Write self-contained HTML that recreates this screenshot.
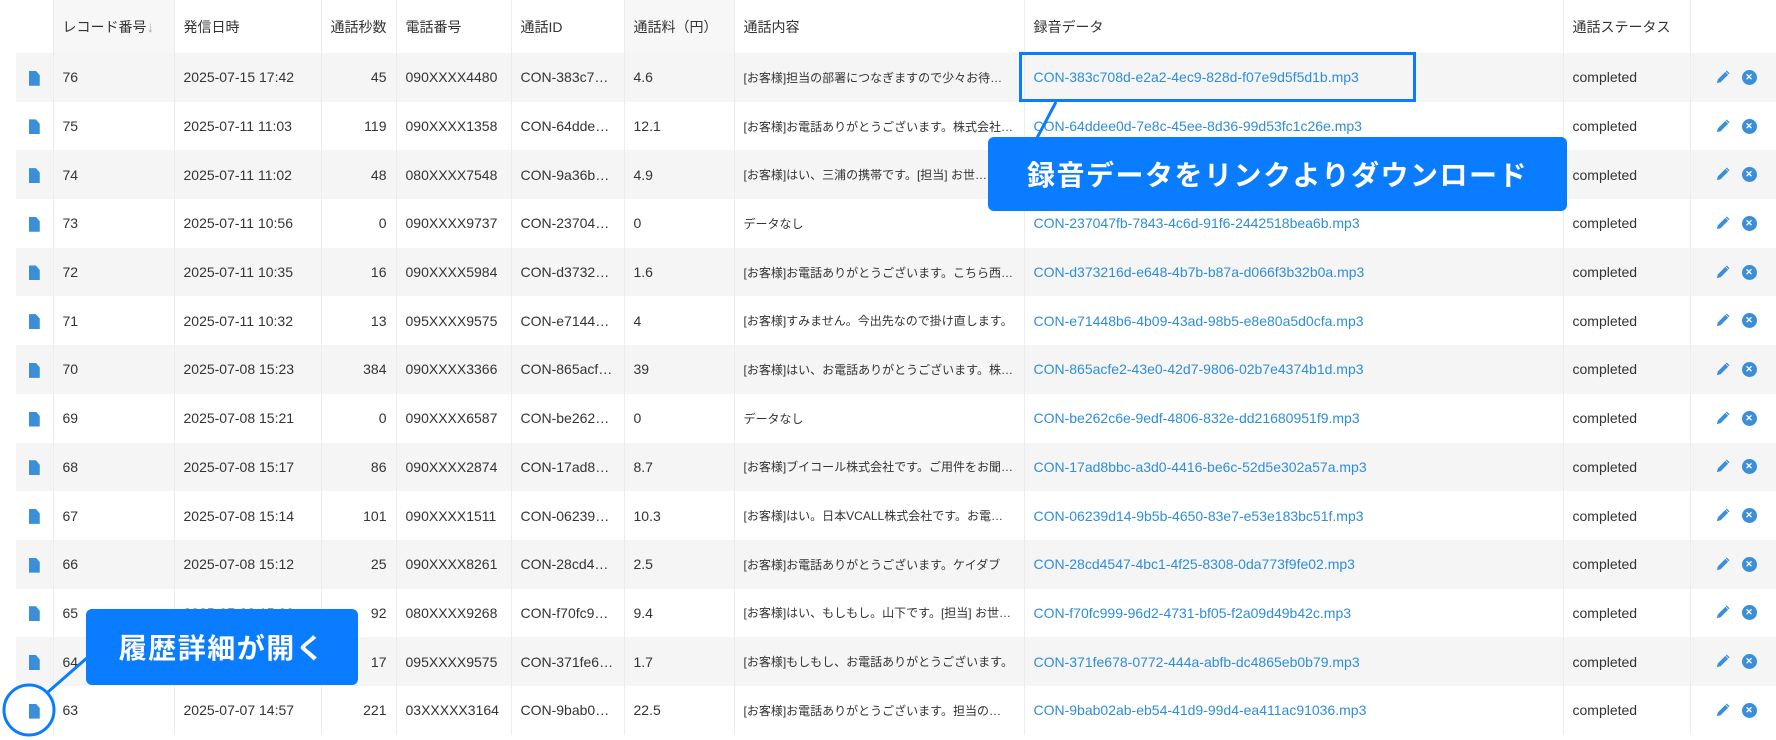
<!DOCTYPE html>
<html><head><meta charset="utf-8"><style>
*{margin:0;padding:0;box-sizing:border-box}
body{width:1776px;height:740px;overflow:hidden;background:#fff;font-family:"Liberation Sans","Noto Sans CJK JP",sans-serif;color:#333;position:relative}
table{position:absolute;left:16px;top:0;border-collapse:collapse;table-layout:fixed;width:1760px}
td,th{border-right:1px solid #ececec;font-weight:normal;text-align:left;padding:0 9px;font-size:14px;white-space:nowrap;overflow:hidden}
th{height:53px;font-size:14px;color:#333}
th.s{background:#f7f7f7}
td{height:48.7px}
tr.g td{background:#f5f5f5}
td.r{text-align:right}
td.c{font-size:12px}
td a{color:#2e8ddb;text-decoration:none}
td.i{padding:0;text-align:center}
.doc{display:inline-block;width:11px;height:15px;background:#3a8fd8;clip-path:polygon(0 0,65% 0,100% 30%,100% 100%,0 100%);vertical-align:middle}
.acts{display:flex;gap:12px;align-items:center;padding-left:15px}
.x{width:15px;height:15px;border-radius:50%;background:#3a8fd8;color:#fff;font-size:9px;line-height:15px;text-align:center;font-weight:bold}
.lbl{position:absolute;background:#0a7cff;color:#fff;font-weight:bold;font-size:28px;border-radius:6px;display:flex;align-items:center;justify-content:center;letter-spacing:1.5px}
</style></head><body>
<svg width="0" height="0" style="position:absolute"><defs><symbol id="p" viewBox="0 0 16 16"><path d="M2 14l1-4 8-8 3 3-8 8z" fill="#3a8fd8"/><path d="M11.5 1.5l1-1 3 3-1 1z" fill="#3a8fd8"/></symbol></defs></svg>
<table>
<colgroup><col style="width:37px"><col style="width:121px"><col style="width:147px"><col style="width:75px"><col style="width:115px"><col style="width:113px"><col style="width:110px"><col style="width:290px"><col style="width:539px"><col style="width:127px"><col style="width:86px"></colgroup>
<tr><th></th><th class="s">レコード番号<span style="color:#aaa;font-size:15px">↓</span></th><th>発信日時</th><th>通話秒数</th><th>電話番号</th><th>通話ID</th><th class="s">通話料（円）</th><th>通話内容</th><th>録音データ</th><th>通話ステータス</th><th></th></tr>
<tr class="g"><td class="i"><span class="doc"></span></td><td>76</td><td>2025-07-15 17:42</td><td class="r">45</td><td>090XXXX4480</td><td>CON-383c7…</td><td>4.6</td><td class="c">[お客様]担当の部署につなぎますので少々お待…</td><td><a>CON-383c708d-e2a2-4ec9-828d-f07e9d5f5d1b.mp3</a></td><td>completed</td><td><div class="acts"><svg width="15" height="15"><use href="#p"/></svg><div class="x">✕</div></div></td></tr>
<tr><td class="i"><span class="doc"></span></td><td>75</td><td>2025-07-11 11:03</td><td class="r">119</td><td>090XXXX1358</td><td>CON-64dde…</td><td>12.1</td><td class="c">[お客様]お電話ありがとうございます。株式会社…</td><td><a>CON-64ddee0d-7e8c-45ee-8d36-99d53fc1c26e.mp3</a></td><td>completed</td><td><div class="acts"><svg width="15" height="15"><use href="#p"/></svg><div class="x">✕</div></div></td></tr>
<tr class="g"><td class="i"><span class="doc"></span></td><td>74</td><td>2025-07-11 11:02</td><td class="r">48</td><td>080XXXX7548</td><td>CON-9a36b…</td><td>4.9</td><td class="c">[お客様]はい、三浦の携帯です。[担当] お世…</td><td><a>CON-9a36b…</a></td><td>completed</td><td><div class="acts"><svg width="15" height="15"><use href="#p"/></svg><div class="x">✕</div></div></td></tr>
<tr><td class="i"><span class="doc"></span></td><td>73</td><td>2025-07-11 10:56</td><td class="r">0</td><td>090XXXX9737</td><td>CON-23704…</td><td>0</td><td class="c">データなし</td><td><a>CON-237047fb-7843-4c6d-91f6-2442518bea6b.mp3</a></td><td>completed</td><td><div class="acts"><svg width="15" height="15"><use href="#p"/></svg><div class="x">✕</div></div></td></tr>
<tr class="g"><td class="i"><span class="doc"></span></td><td>72</td><td>2025-07-11 10:35</td><td class="r">16</td><td>090XXXX5984</td><td>CON-d3732…</td><td>1.6</td><td class="c">[お客様]お電話ありがとうございます。こちら西…</td><td><a>CON-d373216d-e648-4b7b-b87a-d066f3b32b0a.mp3</a></td><td>completed</td><td><div class="acts"><svg width="15" height="15"><use href="#p"/></svg><div class="x">✕</div></div></td></tr>
<tr><td class="i"><span class="doc"></span></td><td>71</td><td>2025-07-11 10:32</td><td class="r">13</td><td>095XXXX9575</td><td>CON-e7144…</td><td>4</td><td class="c">[お客様]すみません。今出先なので掛け直します。</td><td><a>CON-e71448b6-4b09-43ad-98b5-e8e80a5d0cfa.mp3</a></td><td>completed</td><td><div class="acts"><svg width="15" height="15"><use href="#p"/></svg><div class="x">✕</div></div></td></tr>
<tr class="g"><td class="i"><span class="doc"></span></td><td>70</td><td>2025-07-08 15:23</td><td class="r">384</td><td>090XXXX3366</td><td>CON-865acf…</td><td>39</td><td class="c">[お客様]はい、お電話ありがとうございます。株…</td><td><a>CON-865acfe2-43e0-42d7-9806-02b7e4374b1d.mp3</a></td><td>completed</td><td><div class="acts"><svg width="15" height="15"><use href="#p"/></svg><div class="x">✕</div></div></td></tr>
<tr><td class="i"><span class="doc"></span></td><td>69</td><td>2025-07-08 15:21</td><td class="r">0</td><td>090XXXX6587</td><td>CON-be262…</td><td>0</td><td class="c">データなし</td><td><a>CON-be262c6e-9edf-4806-832e-dd21680951f9.mp3</a></td><td>completed</td><td><div class="acts"><svg width="15" height="15"><use href="#p"/></svg><div class="x">✕</div></div></td></tr>
<tr class="g"><td class="i"><span class="doc"></span></td><td>68</td><td>2025-07-08 15:17</td><td class="r">86</td><td>090XXXX2874</td><td>CON-17ad8…</td><td>8.7</td><td class="c">[お客様]ブイコール株式会社です。ご用件をお聞…</td><td><a>CON-17ad8bbc-a3d0-4416-be6c-52d5e302a57a.mp3</a></td><td>completed</td><td><div class="acts"><svg width="15" height="15"><use href="#p"/></svg><div class="x">✕</div></div></td></tr>
<tr><td class="i"><span class="doc"></span></td><td>67</td><td>2025-07-08 15:14</td><td class="r">101</td><td>090XXXX1511</td><td>CON-06239…</td><td>10.3</td><td class="c">[お客様]はい。日本VCALL株式会社です。お電…</td><td><a>CON-06239d14-9b5b-4650-83e7-e53e183bc51f.mp3</a></td><td>completed</td><td><div class="acts"><svg width="15" height="15"><use href="#p"/></svg><div class="x">✕</div></div></td></tr>
<tr class="g"><td class="i"><span class="doc"></span></td><td>66</td><td>2025-07-08 15:12</td><td class="r">25</td><td>090XXXX8261</td><td>CON-28cd4…</td><td>2.5</td><td class="c">[お客様]お電話ありがとうございます。ケイダブ</td><td><a>CON-28cd4547-4bc1-4f25-8308-0da773f9fe02.mp3</a></td><td>completed</td><td><div class="acts"><svg width="15" height="15"><use href="#p"/></svg><div class="x">✕</div></div></td></tr>
<tr><td class="i"><span class="doc"></span></td><td>65</td><td>2025-07-08 15:09</td><td class="r">92</td><td>080XXXX9268</td><td>CON-f70fc9…</td><td>9.4</td><td class="c">[お客様]はい、もしもし。山下です。[担当] お世…</td><td><a>CON-f70fc999-96d2-4731-bf05-f2a09d49b42c.mp3</a></td><td>completed</td><td><div class="acts"><svg width="15" height="15"><use href="#p"/></svg><div class="x">✕</div></div></td></tr>
<tr class="g"><td class="i"><span class="doc"></span></td><td>64</td><td>2025-07-08 15:07</td><td class="r">17</td><td>095XXXX9575</td><td>CON-371fe6…</td><td>1.7</td><td class="c">[お客様]もしもし、お電話ありがとうございます。</td><td><a>CON-371fe678-0772-444a-abfb-dc4865eb0b79.mp3</a></td><td>completed</td><td><div class="acts"><svg width="15" height="15"><use href="#p"/></svg><div class="x">✕</div></div></td></tr>
<tr><td class="i"><span class="doc"></span></td><td>63</td><td>2025-07-07 14:57</td><td class="r">221</td><td>03XXXXX3164</td><td>CON-9bab0…</td><td>22.5</td><td class="c">[お客様]お電話ありがとうございます。担当の…</td><td><a>CON-9bab02ab-eb54-41d9-99d4-ea411ac91036.mp3</a></td><td>completed</td><td><div class="acts"><svg width="15" height="15"><use href="#p"/></svg><div class="x">✕</div></div></td></tr>
</table>
<div style="position:absolute;left:1019px;top:52px;width:397px;height:50px;border:3px solid #0a7cff"></div>
<svg style="position:absolute;left:0;top:0" width="1776" height="740"><line x1="1056" y1="102" x2="1037" y2="138" stroke="#0a7cff" stroke-width="3"/><line x1="48" y1="692" x2="88" y2="657" stroke="#0a7cff" stroke-width="3"/><circle cx="29" cy="710" r="25" fill="none" stroke="#0a7cff" stroke-width="3"/></svg>
<div class="lbl" style="left:988px;top:137px;width:579px;height:74px">録音データをリンクよりダウンロード</div>
<div class="lbl" style="left:86px;top:609px;width:272px;height:76px">履歴詳細が開く</div>
</body></html>
